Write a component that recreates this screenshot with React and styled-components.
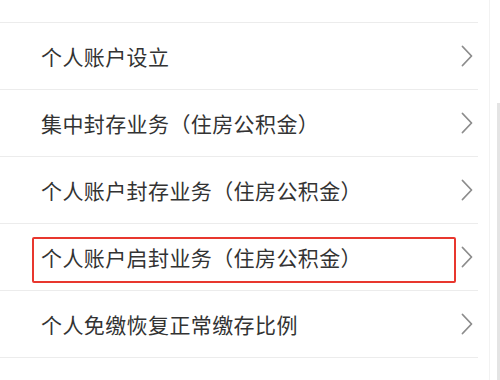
import React from 'react';
import styled, {createGlobalStyle} from 'styled-components';

const GlobalStyle = createGlobalStyle`
html, body {
	margin: 0;
	padding: 0;
	background: #fff;
}
body {
	font-family: "Noto Sans CJK SC", "Noto Sans", sans-serif;
	overflow: hidden;
}
`;

const Screen = styled.div`
width: 500px;
height: 380px;
display: flex;
overflow: hidden;
background: #fff;
`;

const List = styled.div`
width: 478px;
display: flex;
flex-direction: column;
`;

const Row = styled.div`
position: relative;
height: ${p => p.partial ? 22 : 66}px;
flex-shrink: 0;
display: flex;
align-items: center;
padding-left: 41px;
padding-right: 5px;
border-bottom: 1px solid #ececec;
box-sizing: content-box;

${p => p.highlighted && `
&::after {
	content: '';
	position: absolute;
	left: 32px;
	top: 13px;
	width: 420px;
	height: 42px;
	border: 2px solid #e8372e;
	border-radius: 2px;
}
`}
`;

const Label = styled.span`
flex: 1;
font-size: 21px;
color: #333;
letter-spacing: 0.4px;
white-space: nowrap;
`;

const Chevron = () => (
	<svg width="12" height="22" viewBox="0 0 12 22" fill="none">
		<path d="M1.5 1.5 L10.5 11 L1.5 20.5" stroke="#8c8c8c" strokeWidth="1.8" strokeLinecap="round" strokeLinejoin="round" />
	</svg>
);

const Track = styled.div`
margin-left: 11px;
flex: 1;
border-left: 1px solid #f2f2f2;
display: flex;
justify-content: flex-end;
padding-top: 103px;
`;

const Thumb = styled.div`
width: 3px;
background: #e4e4e4;
`;

const items = [
	'个人账户设立',
	'集中封存业务（住房公积金）',
	'个人账户封存业务（住房公积金）',
	'个人账户启封业务（住房公积金）',
	'个人免缴恢复正常缴存比例',
];

export default function App() {
	return <>
		<GlobalStyle />
		<Screen>
			<List>
				<Row partial />
				{items.map((text, i) =>
					<Row key={text} highlighted={i === 3}>
						<Label>{text}</Label>
						<Chevron />
					</Row>
				)}
			</List>
			<Track><Thumb /></Track>
		</Screen>
	</>;
}
